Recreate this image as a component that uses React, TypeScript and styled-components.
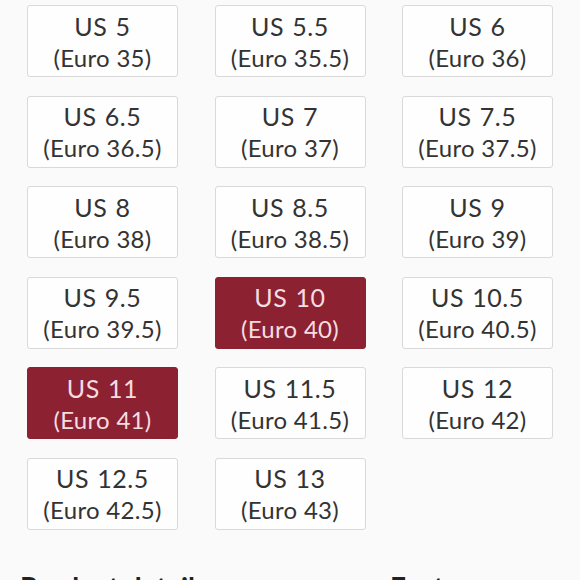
import { FC } from "react";
import styled, { createGlobalStyle } from "styled-components";

type TSize = {
  us: string;
  euro: string;
};

const sizes: TSize[] = [
  { us: "5", euro: "35" },
  { us: "5.5", euro: "35.5" },
  { us: "6", euro: "36" },
  { us: "6.5", euro: "36.5" },
  { us: "7", euro: "37" },
  { us: "7.5", euro: "37.5" },
  { us: "8", euro: "38" },
  { us: "8.5", euro: "38.5" },
  { us: "9", euro: "39" },
  { us: "9.5", euro: "39.5" },
  { us: "10", euro: "40" },
  { us: "10.5", euro: "40.5" },
  { us: "11", euro: "41" },
  { us: "11.5", euro: "41.5" },
  { us: "12", euro: "42" },
  { us: "12.5", euro: "42.5" },
  { us: "13", euro: "43" },
];

const selected = ["10", "11"];

const App: FC = () => {
  return (
    <Page>
      <GlobalStyle />
      <SizeGrid>
        {sizes.map((size) => (
          <SizeButton key={size.us} $active={selected.includes(size.us)}>
            <UsLabel>US {size.us}</UsLabel>
            <EuroLabel>(Euro {size.euro})</EuroLabel>
          </SizeButton>
        ))}
      </SizeGrid>
      <HeadingRow>
        <Heading>Product details</Heading>
        <SideHeading>Features</SideHeading>
      </HeadingRow>
    </Page>
  );
};

export default App;

const GlobalStyle = createGlobalStyle`
  html, body {
    margin: 0;
    padding: 0;
    background: #fbfafa;
    overflow: hidden;
  }
`;

const Page = styled.div`
  width: 580px;
  height: 580px;
  overflow: hidden;
  font-family: Lato, "Open Sans", sans-serif;
  color: #333;
`;

const SizeGrid = styled.div`
  display: grid;
  grid-template-columns: repeat(3, 151px);
  column-gap: 36.5px;
  row-gap: 18.6px;
  padding: 5px 0 0 27px;
`;

const SizeButton = styled.button<{ $active: boolean }>`
  height: 72px;
  display: flex;
  flex-direction: column;
  align-items: center;
  justify-content: center;
  padding: 2px 0 0;
  border-radius: 3px;
  border: 1px solid ${({ $active }) => ($active ? "#8c2131" : "#d9d9d9")};
  background: ${({ $active }) => ($active ? "#8c2131" : "#fefefe")};
  color: ${({ $active }) => ($active ? "#f4dde1" : "#333")};
  font-family: inherit;
  cursor: pointer;
`;

const UsLabel = styled.span`
  font-size: 25px;
  line-height: 31px;
  letter-spacing: 0.6px;
  word-spacing: 1px;
`;

const EuroLabel = styled.span`
  font-size: 24px;
  line-height: 32px;
  letter-spacing: 0.3px;
`;

const HeadingRow = styled.div`
  display: flex;
  padding: 0 0 0 20px;
  margin-top: 40px;
`;

const Heading = styled.h2`
  margin: 0;
  font-size: 28px;
  line-height: 34px;
  font-weight: 700;
  color: #222;
`;

const SideHeading = styled(Heading)`
  margin-left: auto;
  width: 190px;
`;
